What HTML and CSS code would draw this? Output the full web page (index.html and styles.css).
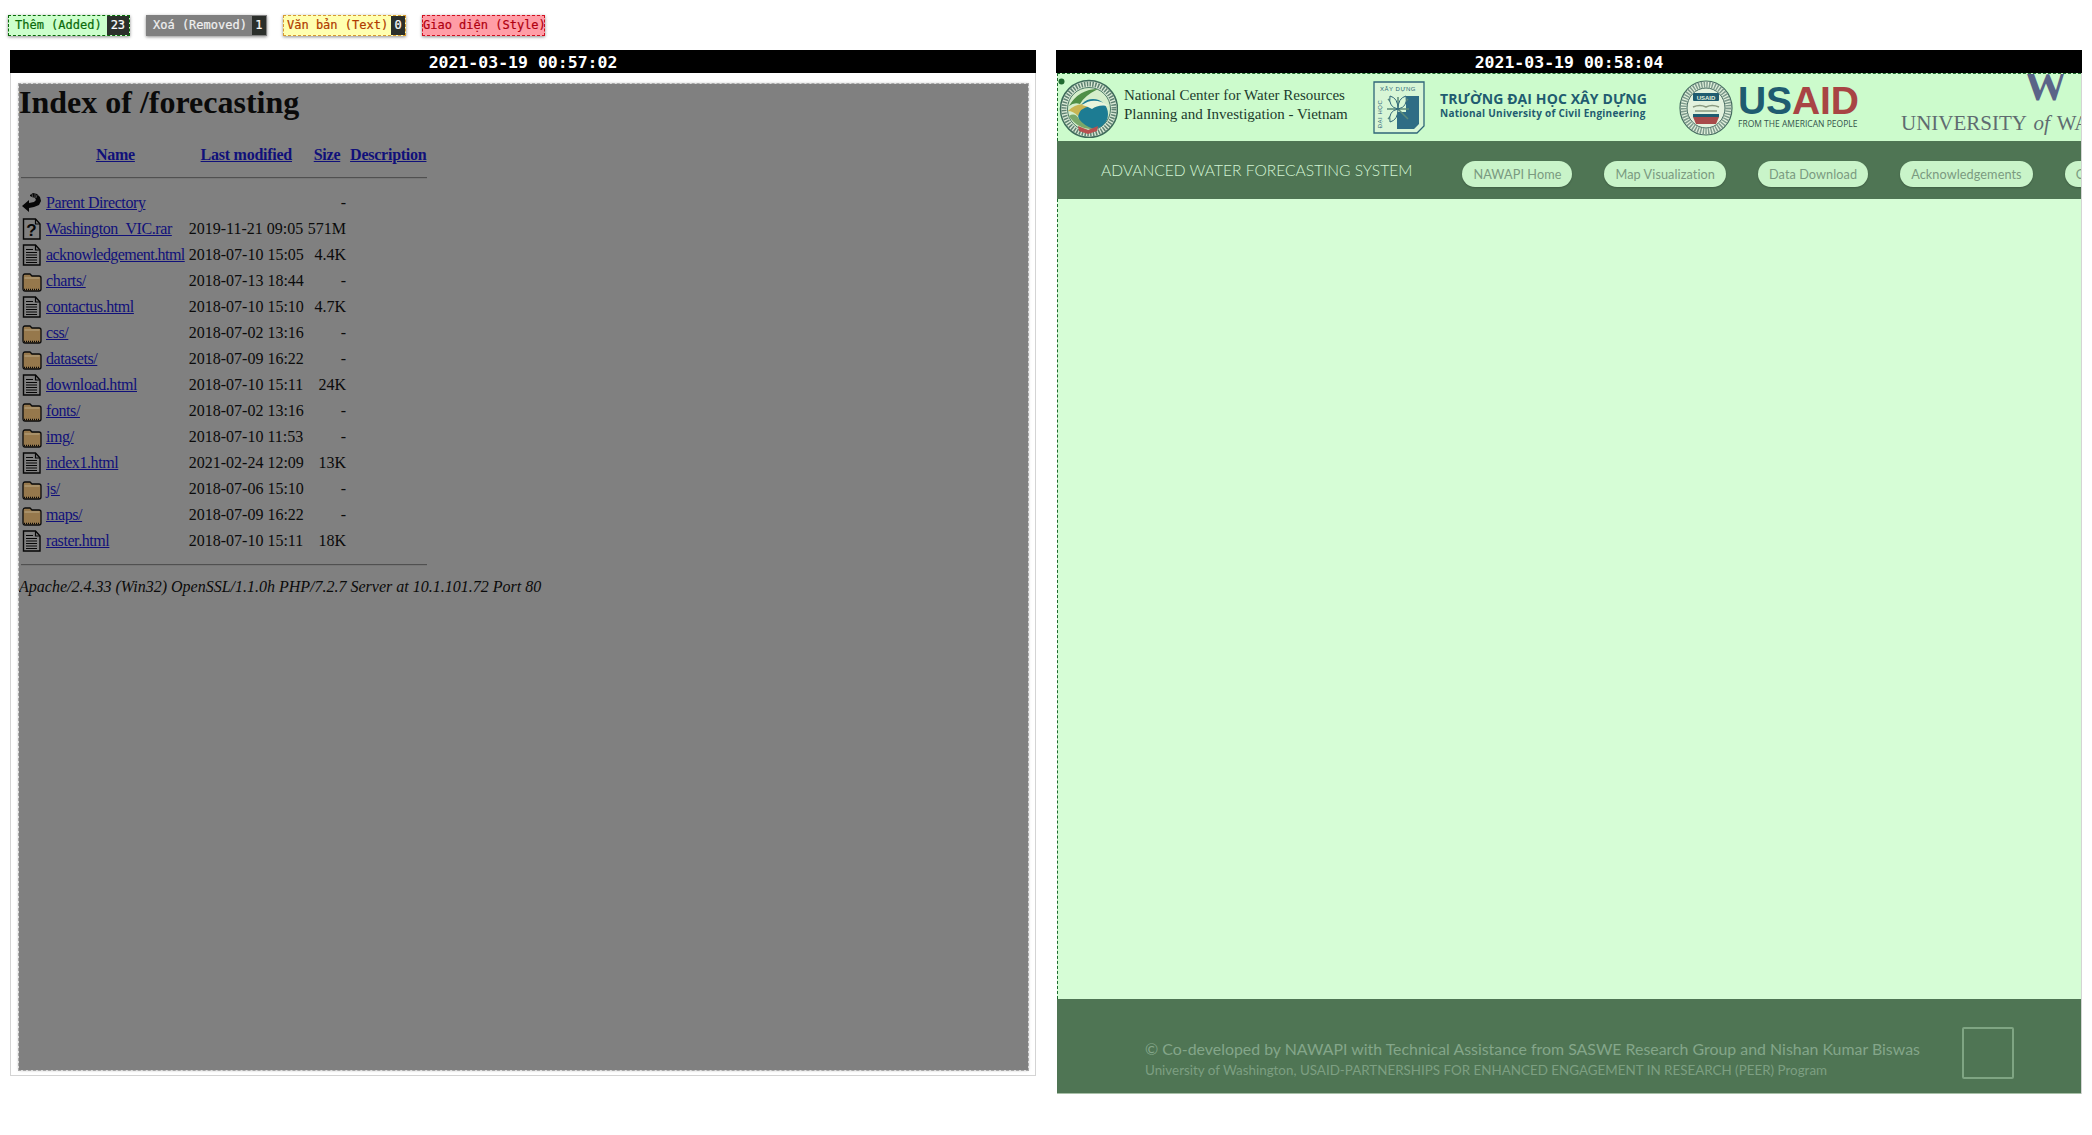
FILE: index.html
```html
<!DOCTYPE html>
<html lang="vi">
<head>
<meta charset="utf-8">
<title>Compare</title>
<link rel="stylesheet" href="styles.css">
</head>
<body>
<svg class="sprite" width="0" height="0" aria-hidden="true">
  <symbol id="i-back" viewBox="0 0 20 22">
    <path d="M8 3l3-2 4 1 3 3 1 4-2 4-5 2-5 1v4L0 14l7-6v3l5-1 2-2-1-2-3-1-2-1z" fill="#060606"/>
    <path d="M10 2l1 4M13 2l0 4M15 3l-1 3" stroke="#5a5a5a" fill="none" stroke-width=".8"/>
  </symbol>
  <symbol id="i-unknown" viewBox="0 0 20 22">
    <path d="M1.500 1h12l4.500 5v15H1.500z" fill="#808080" stroke="#060606" stroke-width="1.400"/>
    <path d="M13.500 1v5h4.500" fill="none" stroke="#060606" stroke-width="1.200"/>
    <text x="9.500" y="18" text-anchor="middle" class="qmark">?</text>
  </symbol>
  <symbol id="i-text" viewBox="0 0 20 22">
    <path d="M1.500 1h12l4.500 5v15H1.500z" fill="#808080" stroke="#060606" stroke-width="1.400"/>
    <path d="M13.500 1v5h4.500" fill="none" stroke="#060606" stroke-width="1.200"/>
    <path d="M4 5.500h7M4 8.500h11M4 11h11M4 13.500h11M4 16h11M4 18.500h11" stroke="#060606" stroke-width="1.100"/>
  </symbol>
  <symbol id="i-folder" viewBox="0 0 20 22">
    <path d="M1 7q0-3 2-3h5l2 2h7q2 0 2 2v11q0 2-2 2H3q-2 0-2-2z" fill="#96784c" stroke="#0a0a0a" stroke-width="1.300"/>
    <path d="M2.500 8h15" stroke="#b4a07c" stroke-width="1.200"/>
    <path d="M2 19.500h16" stroke="#0a0a0a" stroke-width="1.500" stroke-dasharray="1 1"/>
  </symbol>
</svg>

<div class="legend">
  <div class="chip chip-add"><span class="chip-label">Thêm (Added)</span><span class="chip-count">23</span></div>
  <div class="chip chip-del"><span class="chip-label">Xoá (Removed)</span><span class="chip-count">1</span></div>
  <div class="chip chip-text"><span class="chip-label">Văn bản (Text)</span><span class="chip-count">0</span></div>
  <div class="chip chip-style"><span class="chip-label">Giao diện (Style)</span></div>
</div>

<div class="panels">
  <section class="panel panel-old">
    <div class="stamp">2021-03-19 00:57:02</div>
    <div class="frame">
      <div class="removed">
        <h1>Index of /forecasting</h1>
        <table class="listing">
          <tr><th class="col-ic"></th><th><a href="#">Name</a></th><th><a href="#">Last modified</a></th><th><a href="#">Size</a></th><th><a href="#">Description</a></th></tr>
          <tr><th colspan="5" class="rule-cell rule-top"><hr></th></tr>
          <tr><td><svg class="ic"><use href="#i-back"/></svg></td><td><a href="#">Parent Directory</a></td><td></td><td class="sz">-</td><td></td></tr>
          <tr><td><svg class="ic"><use href="#i-unknown"/></svg></td><td><a href="#">Washington_VIC.rar</a></td><td>2019-11-21 09:05</td><td class="sz">571M</td><td></td></tr>
          <tr><td><svg class="ic"><use href="#i-text"/></svg></td><td><a class="long-name" href="#">acknowledgement.html</a></td><td>2018-07-10 15:05</td><td class="sz">4.4K</td><td></td></tr>
          <tr><td><svg class="ic"><use href="#i-folder"/></svg></td><td><a href="#">charts/</a></td><td>2018-07-13 18:44</td><td class="sz">-</td><td></td></tr>
          <tr><td><svg class="ic"><use href="#i-text"/></svg></td><td><a href="#">contactus.html</a></td><td>2018-07-10 15:10</td><td class="sz">4.7K</td><td></td></tr>
          <tr><td><svg class="ic"><use href="#i-folder"/></svg></td><td><a href="#">css/</a></td><td>2018-07-02 13:16</td><td class="sz">-</td><td></td></tr>
          <tr><td><svg class="ic"><use href="#i-folder"/></svg></td><td><a href="#">datasets/</a></td><td>2018-07-09 16:22</td><td class="sz">-</td><td></td></tr>
          <tr><td><svg class="ic"><use href="#i-text"/></svg></td><td><a href="#">download.html</a></td><td>2018-07-10 15:11</td><td class="sz">24K</td><td></td></tr>
          <tr><td><svg class="ic"><use href="#i-folder"/></svg></td><td><a href="#">fonts/</a></td><td>2018-07-02 13:16</td><td class="sz">-</td><td></td></tr>
          <tr><td><svg class="ic"><use href="#i-folder"/></svg></td><td><a href="#">img/</a></td><td>2018-07-10 11:53</td><td class="sz">-</td><td></td></tr>
          <tr><td><svg class="ic"><use href="#i-text"/></svg></td><td><a href="#">index1.html</a></td><td>2021-02-24 12:09</td><td class="sz">13K</td><td></td></tr>
          <tr><td><svg class="ic"><use href="#i-folder"/></svg></td><td><a href="#">js/</a></td><td>2018-07-06 15:10</td><td class="sz">-</td><td></td></tr>
          <tr><td><svg class="ic"><use href="#i-folder"/></svg></td><td><a href="#">maps/</a></td><td>2018-07-09 16:22</td><td class="sz">-</td><td></td></tr>
          <tr><td><svg class="ic"><use href="#i-text"/></svg></td><td><a href="#">raster.html</a></td><td>2018-07-10 15:11</td><td class="sz">18K</td><td></td></tr>
          <tr><th colspan="5" class="rule-cell rule-bottom"><hr></th></tr>
        </table>
        <address>Apache/2.4.33 (Win32) OpenSSL/1.1.0h PHP/7.2.7 Server at 10.1.101.72 Port 80</address>
      </div>
    </div>
  </section>

  <section class="panel panel-new">
    <div class="stamp">2021-03-19 00:58:04</div>
    <div class="site">
      <header class="logos">
        <svg class="seal" viewBox="0 0 60 60">
          <circle cx="31" cy="31" r="28.500" fill="#dcebd8" stroke="#3d6a5a" stroke-width="1.500"/>
          <circle cx="31" cy="31" r="25" fill="none" stroke="#5f8272" stroke-width="5" stroke-dasharray="1.500 1.300"/>
          <circle cx="31" cy="31" r="21.500" fill="#d5eecb" stroke="#4c7a66"/>
          <circle cx="35" cy="36" r="15" fill="#1d7c93"/>
          <path d="M11 28Q21 11 40 11Q26 18 22 26Q16 24 11 28z" fill="#4f8f46"/>
          <path d="M10 33Q20 23 32 28Q22 30 20 38Q15 33 10 33z" fill="#c9b552"/>
          <path d="M11 38Q17 34 21 41Q26 48 36 51Q20 52 11 38z" fill="#7aa86a"/>
          <path d="M24 27Q36 18 51 28Q40 26 34 31Q29 28 24 27z" fill="#e9f5dc"/>
          <path d="M20 48l10 4 10-4-1 5-9 3-9-3z" fill="#b84f4f"/>
          <circle cx="3.500" cy="3.500" r="3" fill="#1e6a2e"/>
        </svg>
        <div class="ncwr">National Center for Water Resources<br>Planning and Investigation - Vietnam</div>
        <svg class="nuce-mark" viewBox="0 0 52 53">
          <path d="M1 1h50v44l-7 7H1z" fill="#d8f6d6" stroke="#2f6678" stroke-width="1.300"/>
          <path d="M33 15h13v28l-5 5H24V31h9z" fill="#2f6d85"/>
          <path d="M15 18l10 10 10-10M15 38l10-10 10 10M25 28V16M14 28h22" stroke="#5b8a7a" stroke-width="1.500" fill="none"/>
          <path d="M17 15q8 2 8 13q-10-2-8-13zM33 15q-8 2-8 13q10-2 8-13zM17 41q8-2 8-13q-10 2-8 13z" fill="#d8f6d6" stroke="#2f6678"/>
          <text x="25" y="10" text-anchor="middle" class="nuce-top">XÂY DỰNG</text>
          <text x="9" y="33" text-anchor="middle" transform="rotate(-90 9 33)" class="nuce-side">ĐẠI HỌC</text>
        </svg>
        <div class="nuce">
          <div class="nuce-vi">TRƯỜNG ĐẠI HỌC XÂY DỰNG</div>
          <div class="nuce-en">National University of Civil Engineering</div>
        </div>
        <svg class="usaid-seal" viewBox="0 0 54 56">
          <ellipse cx="27" cy="28" rx="26" ry="27" fill="#e3f2de" stroke="#44695f" stroke-width="1.200"/>
          <ellipse cx="27" cy="28" rx="22.500" ry="23.500" fill="none" stroke="#7d9a8c" stroke-width="6" stroke-dasharray="1.500 1.200"/>
          <ellipse cx="27" cy="28" rx="19" ry="20" fill="#e3f2de" stroke="#44695f"/>
          <rect x="14" y="13" width="26" height="8" rx="1" fill="#1f5c70"/>
          <text x="27" y="19.500" text-anchor="middle" class="seal-word">USAID</text>
          <path d="M14 27q7-3 13 0q6-3 13 0M16 31l22 0" stroke="#8a9a80" stroke-width="1.500" fill="none"/>
          <rect x="14" y="34" width="26" height="3" fill="#1f5c70"/>
          <path d="M14 37h26l-3 7h-20z" fill="#a84a4a"/>
        </svg>
        <div class="usaid">
          <div class="usaid-word"><span class="usaid-us">US</span><span class="usaid-aid">AID</span></div>
          <div class="usaid-sub">FROM THE AMERICAN PEOPLE</div>
        </div>
        <div class="uw">
          <div class="uw-w">W</div>
          <div class="uw-name">UNIVERSITY <i>of</i> WASHINGTON</div>
        </div>
      </header>
      <nav class="bar">
        <div class="bar-title">ADVANCED WATER FORECASTING SYSTEM</div>
        <a class="pill" href="#">NAWAPI Home</a>
        <a class="pill" href="#">Map Visualization</a>
        <a class="pill" href="#">Data Download</a>
        <a class="pill" href="#">Acknowledgements</a>
        <a class="pill" href="#">Contact Us</a>
      </nav>
      <main class="blank"></main>
      <footer class="foot">
        <div class="foot-text">
          <div class="foot-main">© Co-developed by NAWAPI with Technical Assistance from SASWE Research Group and Nishan Kumar Biswas</div>
          <div class="foot-sub">University of Washington, USAID-PARTNERSHIPS FOR ENHANCED ENGAGEMENT IN RESEARCH (PEER) Program</div>
        </div>
        <div class="foot-box"></div>
      </footer>
    </div>
  </section>
</div>
</body>
</html>
```
FILE: styles.css
```css
* { box-sizing: border-box; }
html, body { margin: 0; padding: 0; background: #fff; }
body { width: 2092px; height: 1135px; overflow: hidden; }
.sprite { position: absolute; }

/* legend */
.legend { display: flex; height: 50px; padding: 15px 0 0 8px; align-items: flex-start; }
.chip {
  display: flex; align-items: stretch; height: 21px; flex: none;
  font: 12px/19px "DejaVu Sans Mono", monospace;
  -webkit-text-stroke: .2px;
  box-shadow: 0 1px 3px rgba(0,0,0,.45);
  border: 1px dashed;
}
.chip-label { padding: 0 5px 0 6px; white-space: nowrap; flex: none; }
.chip-count { background: #2b2f2b; color: #fff; padding: 0 3px; flex: 1; text-align: center; }
.chip-add { background: #ccffcc; color: #0a6a0a; border-color: #0a6a0a; width: 122px; margin-right: 16px; }
.chip-del { background: #808080; color: #f0f0f0; border-color: #808080; width: 121px; margin-right: 16px; }
.chip-text { background: #ffffb0; color: #b03a00; border-color: #d89a30; width: 123px; margin-right: 16px; }
.chip-text .chip-label { padding: 0 3px; }
.chip-style { background: #ff9da6; color: #b00010; border-color: #d01020; width: 123px; }
.chip-style .chip-label { padding: 0; }

/* panels */
.panels { display: flex; gap: 20px; padding-left: 10px; align-items: flex-start; }
.panel { width: 1026px; flex: none; }
.stamp {
  height: 23px; background: #000; color: #fff; text-align: center;
  font: bold 16.500px/25px "DejaVu Sans Mono", monospace;
}

/* old page */
.frame {
  height: 1003px; padding: 11px 7px 4px 8px;
  border: 1px solid #d4d4d4; border-top: 0;
}
.removed {
  height: 986px; background: #808080;
  outline: 1px dashed #a8a8a8; box-shadow: 0 0 3px rgba(0,0,0,.35);
  font: 16px "Liberation Serif", serif; color: #0a0a0a;
  overflow: hidden;
}
.removed h1 { margin: 0 0 22px; font: bold 32px/37px "Liberation Serif", serif; }
.removed a { color: #10107a; }
.listing { border-spacing: 2px; border-collapse: separate; }
.listing td, .listing th { padding: 1px; vertical-align: middle; }
.listing td { white-space: nowrap; }
.listing td a { letter-spacing: -.42px; }
.listing td a.long-name { letter-spacing: -.55px; }
.listing th a { letter-spacing: -.25px; }
.col-ic { width: 22px; }
.sz { text-align: right; }
.ic { display: block; width: 20px; height: 22px; }
.listing .rule-cell { padding: 0; }
.rule-cell hr { border: 0; border-top: 1px solid #505050; border-bottom: 1px solid #777; }
.rule-top hr { margin: 10px 0; }
.rule-bottom hr { margin: 9px 0 8px; }
.qmark { font: bold 17px "Liberation Sans", sans-serif; fill: #060606; }
.removed address { font: italic 16px/18px "Liberation Serif", serif; margin-top: 2px; }

/* new page */
.site { height: 1021px; margin-left: 1px; display: flex; flex-direction: column; border-right: 1px solid #d4d4d4; width: 1025px; overflow: hidden; }
.logos {
  height: 68px; flex: none; display: flex; align-items: center; overflow: hidden;
  background: #ccfbcc; border-top: 1px dashed #1e6a2e; border-left: 1px dashed #1e6a2e;
  color: #1d3b2c;
}
.seal { width: 60px; height: 60px; flex: none; }
.ncwr { font: 15px/19px "Liberation Serif", serif; margin: -6px 0 0 6px; white-space: nowrap; width: 249px; flex: none; }
.nuce-mark { width: 52px; height: 53px; flex: none; }
.nuce-top { font: 6px "Liberation Sans", sans-serif; fill: #2f6678; letter-spacing: .5px; }
.nuce-side { font: 6px "Liberation Sans", sans-serif; fill: #2f6678; letter-spacing: .5px; }
.seal-word { font: bold 6px "Liberation Sans", sans-serif; fill: #e3f2de; }
.nuce { margin: -6px 0 0 15px; width: 239px; flex: none; color: #1f5c70; }
.nuce-vi { font: bold 14px/16px "Open Sans", sans-serif; letter-spacing: .1px; white-space: nowrap; }
.nuce-en { font: bold 10px/12px "Open Sans", sans-serif; letter-spacing: .25px; white-space: nowrap; }
.usaid-seal { width: 54px; height: 56px; flex: none; }
.usaid { margin: -4px 0 0 5px; flex: none; width: 163px; }
.usaid-word { font: bold 39px/36px "Liberation Sans", sans-serif; letter-spacing: -.1px; }
.usaid-us { color: #1f5c70; }
.usaid-aid { color: #a84444; }
.usaid-sub { font: 8.500px/10px "Open Sans", sans-serif; color: #33524a; white-space: nowrap; }
.uw { flex: none; align-self: flex-start; height: 66px; width: 700px; color: #5f6b70; }
.uw-w { font: bold 43px/40px "Liberation Serif", serif; color: #5a6488; margin-left: 123px; margin-top: -8px; }
.uw-name { font: 21px/24px "Liberation Serif", serif; white-space: nowrap; margin-top: 5px; word-spacing: 2px; }

.bar { height: 58px; flex: none; background: #4f7554; display: flex; align-items: center; padding-left: 44px; overflow: hidden; gap: 32px; }
.bar-title { font: 300 15.600px/20px Lato, sans-serif; color: #d4f4d4; white-space: nowrap; margin-right: 18px; flex: none; }
.pill {
  flex: none; height: 26px; padding: 0 11px; border-radius: 13px; background: #c9f4c9;
  font: 400 12.700px/26px Lato, sans-serif; color: #7a9a80; text-decoration: none; white-space: nowrap;
  letter-spacing: .08px;
  box-shadow: 0 1px 2px rgba(0,0,0,.2);
  margin-top: 8px;
}
.blank { height: 800px; flex: none; background: #d6fdd6; border-left: 1px dashed #1e6a2e; }
.foot { height: 95px; flex: none; background: #4f7554; display: flex; align-items: flex-start; padding: 28px 67px 0 88px; border-bottom: 1px solid #a8c0a8; }
.foot-text { flex: 1; padding-top: 12px; white-space: nowrap; }
.foot-main { font: 400 15.900px/20px Lato, sans-serif; color: #84a68a; }
.foot-sub { font: 400 13.400px/23px Lato, sans-serif; color: #7d9f82; }
.foot-box { width: 52px; height: 52px; border: 2px solid #7fa583; border-radius: 2px; flex: none; }
```
